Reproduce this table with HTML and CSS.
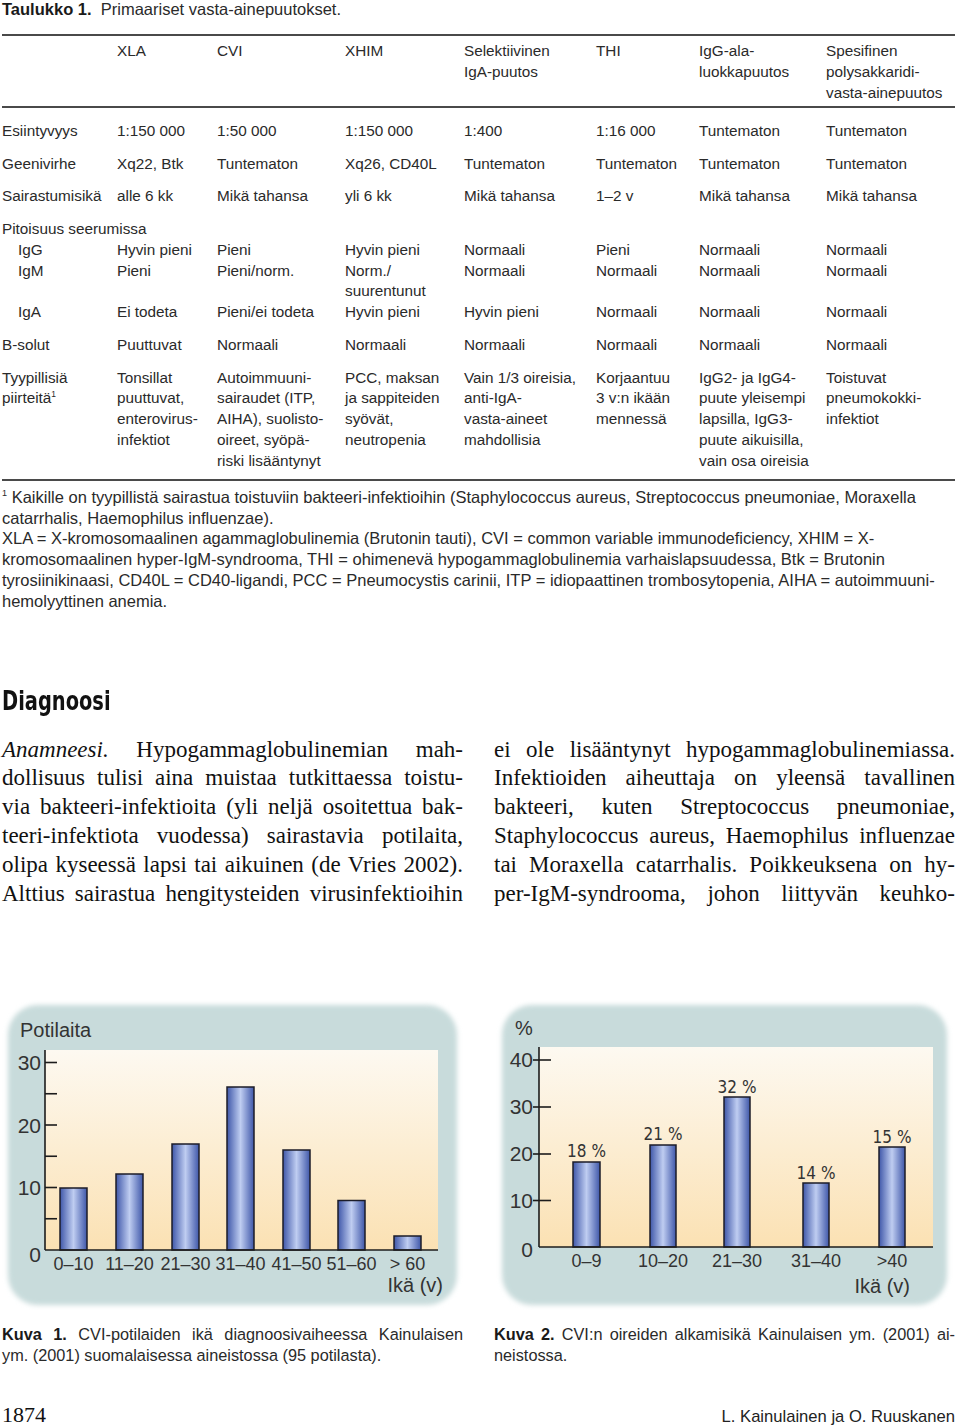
FILE: index.html
```html
<!DOCTYPE html>
<html lang="fi">
<head>
<meta charset="utf-8">
<title>Primaariset vasta-ainepuutokset</title>
<link rel="stylesheet" href="styles.css">
</head>
<body>
<div class="page">
  <p class="table-title"><b>Taulukko 1.</b>&nbsp; Primaariset vasta-ainepuutokset.</p>

  <div class="table">
    <div class="thead row">
      <div></div>
      <div>XLA</div>
      <div>CVI</div>
      <div>XHIM</div>
      <div>Selektiivinen<br>IgA-puutos</div>
      <div>THI</div>
      <div>IgG-ala-<br>luokkapuutos</div>
      <div>Spesifinen<br>polysakkaridi-<br>vasta-ainepuutos</div>
    </div>
    <div class="tbody">
      <div class="row">
        <div>Esiintyvyys</div><div>1:150 000</div><div>1:50 000</div><div>1:150 000</div><div>1:400</div><div>1:16 000</div><div>Tuntematon</div><div>Tuntematon</div>
      </div>
      <div class="row">
        <div>Geenivirhe</div><div>Xq22, Btk</div><div>Tuntematon</div><div>Xq26, CD40L</div><div>Tuntematon</div><div>Tuntematon</div><div>Tuntematon</div><div>Tuntematon</div>
      </div>
      <div class="row">
        <div>Sairastumisikä</div><div>alle 6 kk</div><div>Mikä tahansa</div><div>yli 6 kk</div><div>Mikä tahansa</div><div>1–2 v</div><div>Mikä tahansa</div><div>Mikä tahansa</div>
      </div>
      <div class="group">
        <div class="group-title">Pitoisuus seerumissa</div>
        <div class="row sub">
          <div class="ind">IgG</div><div>Hyvin pieni</div><div>Pieni</div><div>Hyvin pieni</div><div>Normaali</div><div>Pieni</div><div>Normaali</div><div>Normaali</div>
        </div>
        <div class="row sub">
          <div class="ind">IgM</div><div>Pieni</div><div>Pieni/norm.</div><div>Norm./<br>suurentunut</div><div>Normaali</div><div>Normaali</div><div>Normaali</div><div>Normaali</div>
        </div>
        <div class="row sub">
          <div class="ind">IgA</div><div>Ei todeta</div><div>Pieni/ei todeta</div><div>Hyvin pieni</div><div>Hyvin pieni</div><div>Normaali</div><div>Normaali</div><div>Normaali</div>
        </div>
      </div>
      <div class="row">
        <div>B-solut</div><div>Puuttuvat</div><div>Normaali</div><div>Normaali</div><div>Normaali</div><div>Normaali</div><div>Normaali</div><div>Normaali</div>
      </div>
      <div class="row">
        <div>Tyypillisiä<br>piirteitä<sup>1</sup></div>
        <div>Tonsillat<br>puuttuvat,<br>enterovirus-<br>infektiot</div>
        <div>Autoimmuuni-<br>sairaudet (ITP,<br>AIHA), suolisto-<br>oireet, syöpä-<br>riski lisääntynyt</div>
        <div>PCC, maksan<br>ja sappiteiden<br>syövät,<br>neutropenia</div>
        <div>Vain 1/3 oireisia,<br>anti-IgA-<br>vasta-aineet<br>mahdollisia</div>
        <div>Korjaantuu<br>3 v:n ikään<br>mennessä</div>
        <div>IgG2- ja IgG4-<br>puute yleisempi<br>lapsilla, IgG3-<br>puute aikuisilla,<br>vain osa oireisia</div>
        <div>Toistuvat<br>pneumokokki-<br>infektiot</div>
      </div>
    </div>
  </div>

  <p class="notes"><sup>1</sup> Kaikille on tyypillistä sairastua toistuviin bakteeri-infektioihin (Staphylococcus aureus, Streptococcus pneumoniae, Moraxella<br>catarrhalis, Haemophilus influenzae).<br>XLA = X-kromosomaalinen agammaglobulinemia (Brutonin tauti), CVI = common variable immunodeficiency, XHIM = X-<br>kromosomaalinen hyper-IgM-syndrooma, THI = ohimenevä hypogammaglobulinemia varhaislapsuudessa, Btk = Brutonin<br>tyrosiinikinaasi, CD40L = CD40-ligandi, PCC = Pneumocystis carinii, ITP = idiopaattinen trombosytopenia, AIHA = autoimmuuni-<br>hemolyyttinen anemia.</p>

  <h2 class="section"><span>Diagnoosi</span></h2>

  <div class="cols text">
    <div class="col">
      <span class="ln"><i>Anamneesi.</i> Hypogammaglobulinemian mah-</span>
      <span class="ln">dollisuus tulisi aina muistaa tutkittaessa toistu-</span>
      <span class="ln">via bakteeri-infektioita (yli neljä osoitettua bak-</span>
      <span class="ln">teeri-infektiota vuodessa) sairastavia potilaita,</span>
      <span class="ln">olipa kyseessä lapsi tai aikuinen (de Vries 2002).</span>
      <span class="ln">Alttius sairastua hengitysteiden virusinfektioihin</span>
    </div>
    <div class="col">
      <span class="ln">ei ole lisääntynyt hypogammaglobulinemiassa.</span>
      <span class="ln">Infektioiden aiheuttaja on yleensä tavallinen</span>
      <span class="ln">bakteeri, kuten Streptococcus pneumoniae,</span>
      <span class="ln">Staphylococcus aureus, Haemophilus influenzae</span>
      <span class="ln">tai Moraxella catarrhalis. Poikkeuksena on hy-</span>
      <span class="ln">per-IgM-syndrooma, johon liittyvän keuhko-</span>
    </div>
  </div>

  <div class="cols figures">
    <figure class="fig">
      <svg class="chart" width="461" height="310" viewBox="0 0 461 310">
        <defs>
          <filter id="soft1" x="-5%" y="-5%" width="110%" height="110%"><feGaussianBlur stdDeviation="2.5"/></filter>
          <linearGradient id="plot1" x1="0" y1="0" x2="0" y2="1"><stop offset="0" stop-color="#fdf9f1"/><stop offset="1" stop-color="#fbe1b3"/></linearGradient>
          <linearGradient id="bar1" x1="0" y1="0" x2="1" y2="0"><stop offset="0" stop-color="#3f57a9"/><stop offset="0.5" stop-color="#bfcdf1"/><stop offset="1" stop-color="#3f57a9"/></linearGradient>
        </defs>
        <rect x="6" y="5" width="449" height="300" rx="30" fill="#c8dbdb" filter="url(#soft1)"/>
        <rect x="43" y="50" width="393" height="200" fill="url(#plot1)"/>
        <g class="bars" fill="url(#bar1)">
          <rect x="58" y="188" width="27" height="62"/>
          <rect x="114" y="174" width="27" height="76"/>
          <rect x="170" y="144" width="27" height="106"/>
          <rect x="225" y="87" width="27" height="163"/>
          <rect x="281" y="150" width="27" height="100"/>
          <rect x="336" y="200.5" width="27" height="49.5"/>
          <rect x="392" y="236" width="27" height="14"/>
        </g>
        <g class="axis">
          <line x1="43" y1="50" x2="43" y2="250"/>
          <line x1="43" y1="250" x2="436" y2="250"/>
          <line x1="43" y1="62.5" x2="55" y2="62.5"/>
          <line x1="43" y1="93.75" x2="55" y2="93.75"/>
          <line x1="43" y1="125" x2="55" y2="125"/>
          <line x1="43" y1="156.25" x2="55" y2="156.25"/>
          <line x1="43" y1="187.5" x2="55" y2="187.5"/>
          <line x1="43" y1="218.75" x2="55" y2="218.75"/>
        </g>
        <text class="ct ct-title" x="18" y="37">Potilaita</text>
        <g class="ct ct-y">
          <text x="39" y="70">30</text>
          <text x="39" y="133">20</text>
          <text x="39" y="195">10</text>
          <text x="39" y="262">0</text>
        </g>
        <g class="ct ct-x">
          <text x="71.5" y="270">0–10</text>
          <text x="127.5" y="270">11–20</text>
          <text x="183.5" y="270">21–30</text>
          <text x="238.5" y="270">31–40</text>
          <text x="294.5" y="270">41–50</text>
          <text x="349.5" y="270">51–60</text>
          <text x="405.5" y="270">&gt; 60</text>
        </g>
        <text class="ct ct-unit" x="441" y="292">Ikä (v)</text>
      </svg>
      <figcaption class="caption">
        <span class="cl just"><b>Kuva 1.</b> CVI-potilaiden ikä diagnoosivaiheessa Kainulaisen</span>
        <span class="cl">ym. (2001) suomalaisessa aineistossa (95 potilasta).</span>
      </figcaption>
    </figure>
    <figure class="fig">
      <svg class="chart" width="461" height="310" viewBox="0 0 461 310">
        <defs>
          <filter id="soft2" x="-5%" y="-5%" width="110%" height="110%"><feGaussianBlur stdDeviation="2.5"/></filter>
          <linearGradient id="plot2" x1="0" y1="0" x2="0" y2="1"><stop offset="0" stop-color="#fdf9f1"/><stop offset="1" stop-color="#fbe1b3"/></linearGradient>
          <linearGradient id="bar2" x1="0" y1="0" x2="1" y2="0"><stop offset="0" stop-color="#3f57a9"/><stop offset="0.5" stop-color="#bfcdf1"/><stop offset="1" stop-color="#3f57a9"/></linearGradient>
        </defs>
        <rect x="8" y="5" width="445" height="300" rx="30" fill="#c8dbdb" filter="url(#soft2)"/>
        <rect x="45" y="47" width="394" height="200" fill="url(#plot2)"/>
        <g class="bars" fill="url(#bar2)">
          <rect x="79" y="162" width="27" height="85"/>
          <rect x="156" y="145" width="26" height="102"/>
          <rect x="230" y="97" width="26" height="150"/>
          <rect x="309" y="183" width="26" height="64"/>
          <rect x="385" y="147" width="26" height="100"/>
        </g>
        <g class="axis">
          <line x1="45" y1="47" x2="45" y2="247"/>
          <line x1="45" y1="247" x2="439" y2="247"/>
          <line x1="39" y1="60" x2="57" y2="60"/>
          <line x1="39" y1="107" x2="57" y2="107"/>
          <line x1="39" y1="154" x2="57" y2="154"/>
          <line x1="39" y1="200.5" x2="57" y2="200.5"/>
        </g>
        <text class="ct ct-title" x="21" y="35">%</text>
        <g class="ct ct-y">
          <text x="39" y="67">40</text>
          <text x="39" y="114">30</text>
          <text x="39" y="161">20</text>
          <text x="39" y="208">10</text>
          <text x="39" y="257">0</text>
        </g>
        <g class="ct ct-val">
          <text x="92.5" y="157">18 %</text>
          <text x="169" y="140">21 %</text>
          <text x="243" y="93">32 %</text>
          <text x="322" y="179">14 %</text>
          <text x="398" y="143">15 %</text>
        </g>
        <g class="ct ct-x">
          <text x="92.5" y="267">0–9</text>
          <text x="169" y="267">10–20</text>
          <text x="243" y="267">21–30</text>
          <text x="322" y="267">31–40</text>
          <text x="398" y="267">&gt;40</text>
        </g>
        <text class="ct ct-unit" x="416" y="293">Ikä (v)</text>
      </svg>
      <figcaption class="caption">
        <span class="cl just"><b>Kuva 2.</b> CVI:n oireiden alkamisikä Kainulaisen ym. (2001) ai-</span>
        <span class="cl">neistossa.</span>
      </figcaption>
    </figure>
  </div>

  <footer class="footer">
    <span class="pageno">1874</span>
    <span class="authors">L. Kainulainen ja O. Ruuskanen</span>
  </footer>
</div>
</body>
</html>
```

FILE: styles.css
```css
html, body {
  margin: 0;
  padding: 0;
  background: #ffffff;
}

.page {
  width: 953px;
  padding: 0 5px 0 2px;
  font-family: "Liberation Sans", Arial, sans-serif;
  color: #2a2a2a;
}

.table-title {
  margin: 0;
  font-size: 16.5px;
  line-height: 18px;
}

.table-title b {
  color: #1a1a1a;
}

.table {
  margin-top: 16px;
  border-top: 2px solid #4a4a4a;
  border-bottom: 2px solid #4a4a4a;
  font-size: 15.3px;
  line-height: 20.75px;
}

.row {
  display: grid;
  grid-template-columns: 115px 100px 128px 119px 132px 103px 127px 1fr;
  padding: 6px 0;
  white-space: nowrap;
}

.thead {
  padding: 5px 0 2.5px;
  border-bottom: 2px solid #4a4a4a;
}

.tbody {
  padding: 7px 0 1.5px;
}

.group {
  padding: 6px 0;
}

.row.sub {
  padding: 0;
}

.ind {
  padding-left: 16px;
}

sup {
  font-size: 0.55em;
  line-height: 0;
  vertical-align: 0.75em;
}

.notes {
  margin: 6px 0 0;
  font-size: 16.5px;
  line-height: 20.8px;
  white-space: nowrap;
}

.section {
  margin: 74px 0 0;
  font-family: "DejaVu Sans Condensed", "DejaVu Sans", sans-serif;
  font-weight: 700;
  font-size: 27px;
  line-height: 30px;
  color: #111;
}

.section span {
  display: inline-block;
  transform: scaleX(0.8);
  transform-origin: left center;
}

.cols {
  display: grid;
  grid-template-columns: 461px 461px;
  column-gap: 31px;
}

.text {
  margin-top: 20px;
  font-family: "Liberation Serif", "Times New Roman", serif;
  font-size: 23px;
  line-height: 28.8px;
  color: #111;
}

.ln {
  display: block;
  text-align: justify;
  text-align-last: justify;
  white-space: nowrap;
}

.figures {
  margin-top: 92px;
}

.fig {
  margin: 0;
}

.chart {
  display: block;
}

.axis line {
  stroke: #1c1c1c;
  stroke-width: 1.6;
}

.bars rect {
  stroke: #1c1c28;
  stroke-width: 1.5;
}

.ct {
  font-family: "Liberation Sans", Arial, sans-serif;
  fill: #333;
}

.ct-title {
  font-size: 20px;
}

.ct-y text {
  font-size: 21px;
  text-anchor: end;
}

.ct-x text {
  font-size: 18px;
  text-anchor: middle;
}

.ct-val text {
  font-family: "DejaVu Sans Condensed", sans-serif;
  font-size: 17px;
  text-anchor: middle;
}

.ct-unit {
  font-size: 20px;
  text-anchor: end;
}

.caption {
  margin-top: 13.5px;
  font-size: 16.3px;
  line-height: 21px;
}

.cl {
  display: block;
  white-space: nowrap;
}

.cl.just {
  text-align: justify;
  text-align-last: justify;
}

.caption b {
  color: #1a1a1a;
}

.footer {
  margin-top: 37px;
  display: flex;
  justify-content: space-between;
  align-items: baseline;
}

.pageno {
  font-family: "Liberation Serif", "Times New Roman", serif;
  font-size: 22px;
  line-height: 24px;
  color: #111;
}

.authors {
  font-size: 16.6px;
  line-height: 24px;
  color: #222;
}
```
